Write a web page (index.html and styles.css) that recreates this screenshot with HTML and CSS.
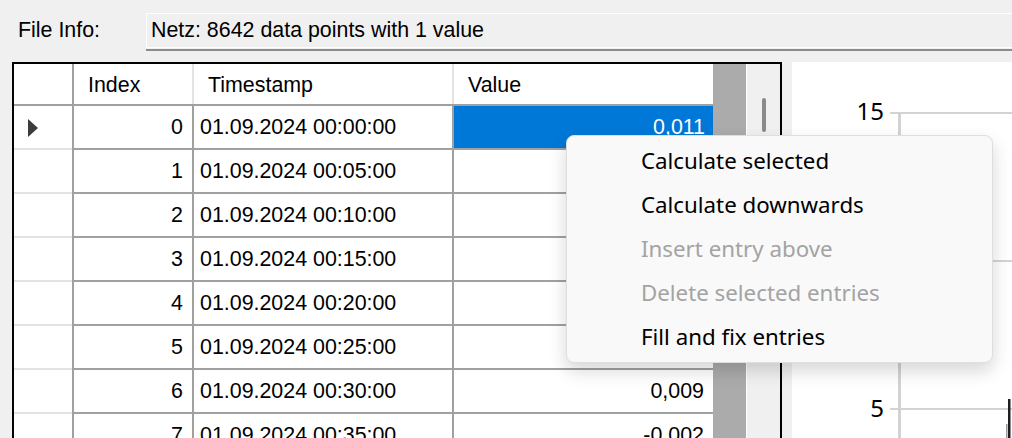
FILE: index.html
```html
<!DOCTYPE html>
<html lang="en">
<head>
    <meta charset="UTF-8">
    <title>Data Editor</title>
    <link rel="stylesheet" href="styles.css">
</head>
<body>
    <div class="file-info">
        <span class="file-label">File Info:</span>
        <div class="info-box">Netz: 8642 data points with 1 value</div>
    </div>

    <div class="main">
        <div class="grid-frame">
            <div class="data-grid">
                <div class="corner"></div>
                <div class="col-head sep">Index</div>
                <div class="col-head sep">Timestamp</div>
                <div class="col-head">Value</div>

                <div class="row-head"><span class="arrow"></span></div>
                <div class="cell num">0</div>
                <div class="cell">01.09.2024 00:00:00</div>
                <div class="cell num selected">0,011</div>

                <!-- values of rows 1-5 sit under the popup menu -->
                <div class="row-head"></div>
                <div class="cell num">1</div>
                <div class="cell">01.09.2024 00:05:00</div>
                <div class="cell num"></div>

                <div class="row-head"></div>
                <div class="cell num">2</div>
                <div class="cell">01.09.2024 00:10:00</div>
                <div class="cell num"></div>

                <div class="row-head"></div>
                <div class="cell num">3</div>
                <div class="cell">01.09.2024 00:15:00</div>
                <div class="cell num"></div>

                <div class="row-head"></div>
                <div class="cell num">4</div>
                <div class="cell">01.09.2024 00:20:00</div>
                <div class="cell num"></div>

                <div class="row-head"></div>
                <div class="cell num">5</div>
                <div class="cell">01.09.2024 00:25:00</div>
                <div class="cell num"></div>

                <div class="row-head"></div>
                <div class="cell num">6</div>
                <div class="cell">01.09.2024 00:30:00</div>
                <div class="cell num">0,009</div>

                <div class="row-head"></div>
                <div class="cell num">7</div>
                <div class="cell">01.09.2024 00:35:00</div>
                <div class="cell num">-0,002</div>
            </div>
            <div class="grid-empty"></div>
            <div class="vscroll"><div class="thumb"></div></div>
        </div>

        <div class="chart">
            <svg width="220" height="380" viewBox="0 0 220 380">
                <rect x="98" y="50" width="122" height="2" fill="#d3d3d3"/>
                <rect x="98" y="198" width="122" height="2" fill="#d3d3d3"/>
                <rect x="98" y="346" width="122" height="2" fill="#d3d3d3"/>
                <rect x="106" y="50" width="3" height="330" fill="#d3d3d3"/>
                <text class="axis-label" x="92" y="58" text-anchor="end">15</text>
                <text class="axis-label" x="92" y="355" text-anchor="end">5</text>
                <rect x="214" y="362" width="1.5" height="18" fill="#9a9a9a"/>
                <rect x="216" y="337" width="2.5" height="43" fill="#1e1e1e"/>
            </svg>
        </div>
    </div>

    <div class="context-menu">
        <div class="menu-item">Calculate selected</div>
        <div class="menu-item">Calculate downwards</div>
        <div class="menu-item disabled">Insert entry above</div>
        <div class="menu-item disabled">Delete selected entries</div>
        <div class="menu-item">Fill and fix entries</div>
    </div>
</body>
</html>
```

FILE: styles.css
```css
body {
    margin: 0;
    height: 438px;
    overflow: hidden;
    position: relative;
    background-color: #f0f0f0;
    font-family: "Liberation Sans", Arial, sans-serif;
    font-size: 21.4px;
    color: #000;
}

/* top info line */
.file-info {
    display: flex;
    align-items: center;
    height: 36px;
    padding-top: 12px;
}

.file-label {
    width: 128px;
    padding-left: 18px;
}

.info-box {
    flex: 1;
    height: 33px;
    line-height: 33px;
    padding-left: 4px;
    border: 1px solid #fff;
    border-right: none;
    box-shadow: 0 1px 0 #f0f0f0, 0 3px 0 #8c8c8c;
    white-space: nowrap;
}

.main {
    display: flex;
    margin-top: 14px;
}

/* data grid */
.grid-frame {
    display: flex;
    width: 766px;
    height: 380px;
    margin-left: 12px;
    border: 2px solid #000;
    background-color: #ababab;
    overflow: hidden;
}

.data-grid {
    width: 699px;
    display: grid;
    grid-template-columns: 58px 118px 258px 259px;
    grid-template-rows: 40px;
    grid-auto-rows: 42px;
    gap: 2px;
    align-content: start;
    background-color: #a0a0a0;
}

.corner,
.col-head,
.row-head,
.cell {
    background-color: #fff;
    display: flex;
    align-items: center;
    white-space: nowrap;
}

.col-head {
    padding-left: 14px;
    padding-top: 3px;
}

.col-head.sep {
    box-shadow: 2px 0 0 #e3e3e3;
}

.row-head {
    box-shadow: 0 2px 0 #e3e3e3;
    padding-left: 14px;
}

.arrow {
    width: 0;
    height: 0;
    border-left: 10px solid #3c3c3c;
    border-top: 9px solid transparent;
    border-bottom: 9px solid transparent;
    margin-top: 2px;
}

.cell {
    padding-left: 6px;
}

.cell.num {
    justify-content: flex-end;
    padding-left: 0;
    padding-right: 9px;
}

.cell.selected {
    background-color: #0078d7;
    color: #fff;
    padding-right: 8px;
}

.grid-empty {
    width: 33px;
    border-right: 1px solid #fff;
}

.vscroll {
    width: 33px;
    background-color: #f0f0f0;
}

.thumb {
    width: 4px;
    height: 34px;
    margin: 34px 0 0 15px;
    border-radius: 2px;
    background-color: #8a8a8a;
}

/* chart */
.chart {
    flex: 1;
    height: 380px;
    margin-left: 10px;
    background-color: #fff;
}

.chart svg {
    display: block;
}

.axis-label {
    font-family: "Noto Sans", "Open Sans", sans-serif;
    font-size: 24px;
    fill: #000;
}

/* popup menu */
.context-menu {
    position: absolute;
    left: 566px;
    top: 135px;
    width: 425px;
    padding: 3px 0;
    background-color: #f9f9f9;
    border: 1px solid #dedede;
    border-radius: 8px;
    box-shadow: 0 8px 18px rgba(0, 0, 0, 0.16);
    font-family: "Noto Sans", "Open Sans", sans-serif;
    font-size: 22.3px;
}

.menu-item {
    height: 44px;
    line-height: 44px;
    padding-left: 74px;
    color: #000;
}

.menu-item.disabled {
    color: #a3a3a3;
}
```
